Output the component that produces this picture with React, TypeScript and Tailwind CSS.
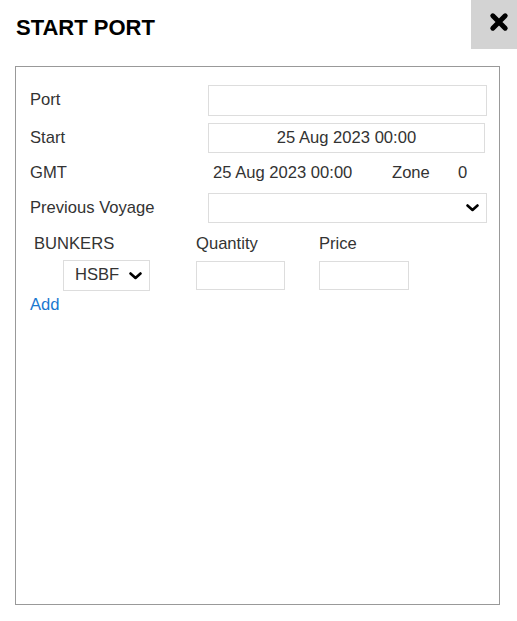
import React from "react";

function Chevron({ className = "" }: { className?: string }) {
  return (
    <svg width="13" height="8" viewBox="0 0 13 8" className={className}>
      <polyline
        points="1.5,1.5 6.5,6 11.5,1.5"
        fill="none"
        stroke="#000"
        strokeWidth="2.6"
        strokeLinecap="round"
        strokeLinejoin="round"
      />
    </svg>
  );
}

function CloseIcon() {
  return (
    <svg width="20" height="20" viewBox="0 0 20 20">
      <path
        d="M3.8 3.8 L16.2 16.2 M16.2 3.8 L3.8 16.2"
        stroke="#000"
        strokeWidth="5"
        strokeLinecap="round"
      />
    </svg>
  );
}

export default function App() {
  return (
    <div
      className="w-[517px] h-[621px] bg-white text-[16.6px] text-[#333]"
      style={{ fontFamily: '"Liberation Sans", Arial, sans-serif' }}
    >
      <div className="flex justify-between h-[49px]">
        <h1 className="pl-[16px] pt-[17px] text-[22px] leading-none font-bold text-black">
          START PORT
        </h1>
        <button className="w-[46px] h-[49px] bg-[#d3d3d3] flex items-start justify-start pl-[18px] pt-[12px]">
          <CloseIcon />
        </button>
      </div>

      <div className="ml-[15px] mt-[17px] w-[485px] h-[539px] border border-[#999] pt-[18px] pl-[14px] pr-[11px]">
        <div className="flex items-center h-[31px]">
          <span className="w-[178px]">Port</span>
          <div className="w-[279px] h-[31px] border border-[#ddd]" />
        </div>

        <div className="flex items-center h-[30px] mt-[7px]">
          <span className="w-[178px]">Start</span>
          <div className="w-[277px] h-[30px] border border-[#ddd] flex items-center justify-center">
            25 Aug 2023 00:00
          </div>
        </div>

        <div className="flex items-center h-[26px] mt-[7px]">
          <span className="w-[183px]">GMT</span>
          <span className="w-[179px]">25 Aug 2023 00:00</span>
          <span className="w-[66px]">Zone</span>
          <span>0</span>
        </div>

        <div className="flex items-center h-[30px] mt-[7px]">
          <span className="w-[178px]">Previous Voyage</span>
          <div className="w-[279px] h-[30px] border border-[#ddd] flex items-center justify-end pr-[7px]">
            <Chevron />
          </div>
        </div>

        <div className="flex items-center h-[31px] mt-[6px]">
          <span className="w-[166px] pl-[4px]">BUNKERS</span>
          <span className="w-[123px]">Quantity</span>
          <span>Price</span>
        </div>

        <div className="flex items-center h-[31px]">
          <div className="w-[166px] pl-[33px]">
            <div className="w-[87px] h-[31px] border border-[#ddd] flex items-center justify-between pl-[11px] pr-[7px]">
              <span>HSBF</span>
              <Chevron />
            </div>
          </div>
          <div className="w-[123px]">
            <div className="w-[89px] h-[29px] border border-[#ddd]" />
          </div>
          <div className="w-[90px] h-[29px] border border-[#ddd]" />
        </div>

        <div className="mt-[4px] leading-[19px] text-[#1a78d0]">Add</div>
      </div>
    </div>
  );
}
